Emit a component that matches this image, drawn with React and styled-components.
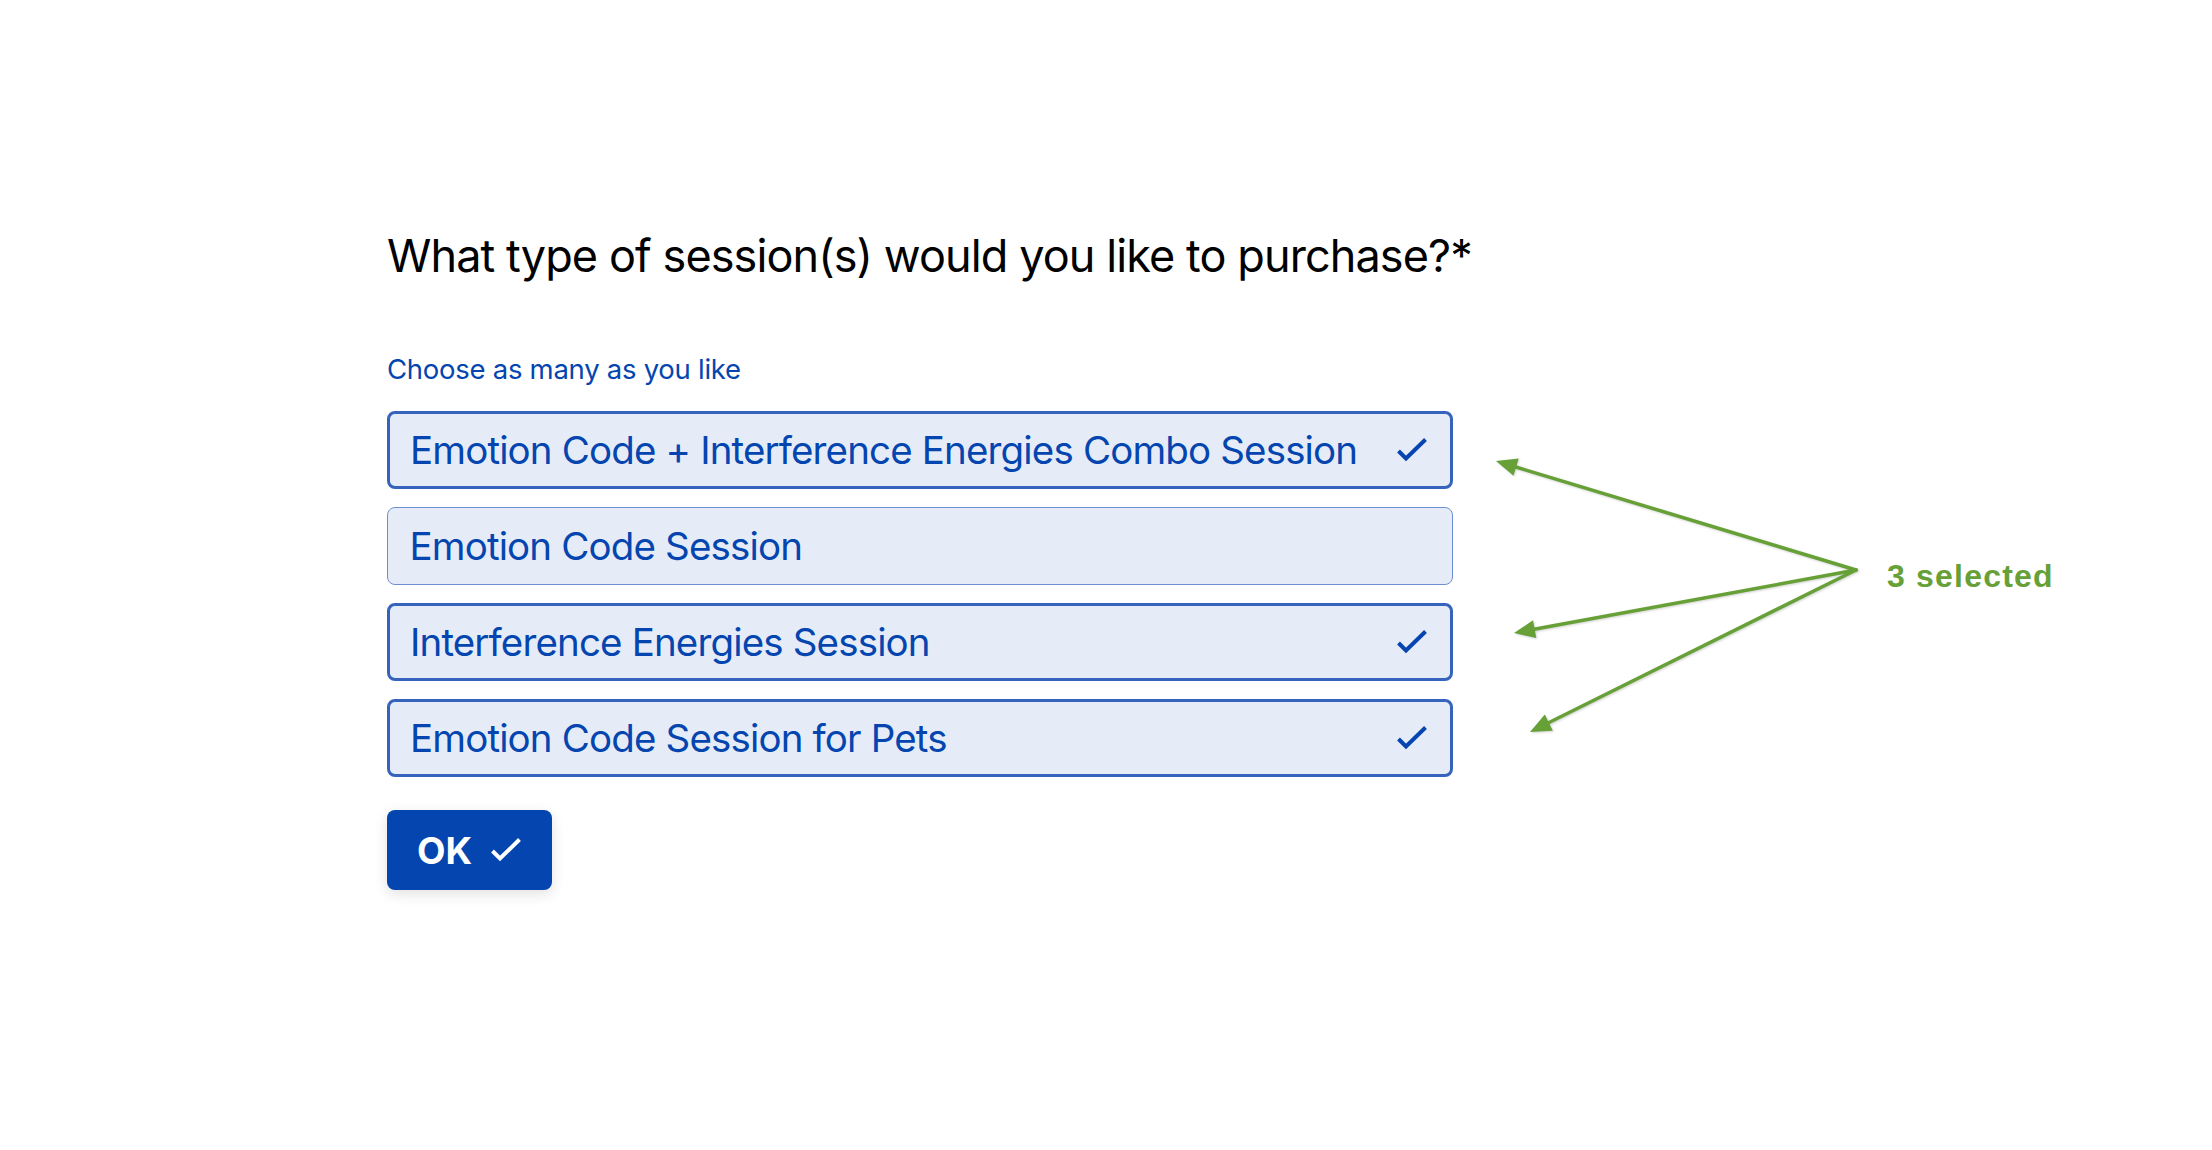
import React from "react";
import styled, { createGlobalStyle } from "styled-components";

const GlobalStyle = createGlobalStyle`
  html, body { margin: 0; padding: 0; background: #ffffff; }
  body { font-family: Inter, "Noto Sans", sans-serif; }
`;

const Page = styled.main`
  width: 2212px;
  height: 1150px;
  box-sizing: border-box;
  padding: 229px 0 0 387px;
  background: #ffffff;
`;

const Heading = styled.h1`
  margin: 0;
  font-family: Inter, sans-serif;
  font-weight: 400;
  font-size: 45px;
  line-height: 54px;
  color: #000000;
  letter-spacing: -0.9px;
`;

const Hint = styled.p`
  margin: 70px 0 0;
  font-family: Inter, sans-serif;
  font-size: 27.5px;
  line-height: 33px;
  color: #0445af;
  letter-spacing: -0.27px;
`;

const ChoiceRow = styled.div`
  display: flex;
  align-items: flex-start;
  margin-top: 25px;
`;

const ChoiceList = styled.ul`
  list-style: none;
  margin: 0;
  padding: 0;
  width: 1066px;
  display: flex;
  flex-direction: column;
  gap: 18px;
`;

const Choice = styled.li`
  box-sizing: border-box;
  height: 78px;
  display: flex;
  align-items: center;
  justify-content: space-between;
  padding: 0 22px 0 ${(p) => (p.$selected ? 20 : 21.5)}px;
  background: #e6ecf7;
  border: ${(p) => (p.$selected ? "3px solid #3563be" : "1.5px solid #6d8fd2")};
  border-radius: 8px;
  font-family: Inter, sans-serif;
  font-size: 38.5px;
  color: #0445af;
  letter-spacing: -0.85px;
`;

const CheckIcon = styled.svg`
  width: 32px;
  height: 26px;
  flex: none;
  display: block;
`;

const Annotation = styled.svg`
  width: 420px;
  height: 366px;
  flex: none;
  display: block;
  overflow: visible;
  filter: drop-shadow(1px 1px 1px rgba(0, 0, 0, 0.18));
`;

const Label = styled.span`
  margin: 149px 0 0 14px;
  font-family: "Liberation Sans", Arial, sans-serif;
  font-weight: 700;
  font-size: 32px;
  line-height: 1;
  letter-spacing: 1.2px;
  color: #66a036;
  white-space: nowrap;
`;

const OkButton = styled.button`
  margin-top: 33px;
  box-sizing: border-box;
  width: 165px;
  height: 80px;
  display: flex;
  align-items: center;
  gap: 18px;
  padding: 0 0 0 30px;
  border: none;
  border-radius: 8px;
  background: #0445af;
  color: #ffffff;
  font-family: Inter, sans-serif;
  font-weight: 700;
  font-size: 37px;
  box-shadow: 0 4px 14px rgba(0, 0, 0, 0.12);
`;

const Check = ({ color = "#0445af" }) => (
  <CheckIcon viewBox="0 0 32 26" aria-hidden="true">
    <polyline
      points="2.5,14 10,21.5 29.5,2.5"
      fill="none"
      stroke={color}
      strokeWidth="4"
      strokeLinecap="butt"
      strokeLinejoin="miter"
    />
  </CheckIcon>
);

const apex = [403, 159];
const tips = [
  [43, 50],
  [61, 222],
  [77, 321],
];

function arrow(a, t) {
  const dx = t[0] - a[0];
  const dy = t[1] - a[1];
  const len = Math.hypot(dx, dy);
  const ux = dx / len;
  const uy = dy / len;
  const L = 21;
  const W = 18;
  const bx = t[0] - ux * L;
  const by = t[1] - uy * L;
  const nx = -uy;
  const ny = ux;
  const head = `${t[0]},${t[1]} ${bx + (nx * W) / 2},${by + (ny * W) / 2} ${bx - (nx * W) / 2},${by - (ny * W) / 2}`;
  return { line: [a[0], a[1], bx + ux * 2, by + uy * 2], head };
}

const options = [
  { label: "Emotion Code + Interference Energies Combo Session", selected: true },
  { label: "Emotion Code Session", selected: false },
  { label: "Interference Energies Session", selected: true },
  { label: "Emotion Code Session for Pets", selected: true },
];

export default function App() {
  const green = "#66a036";
  return (
    <>
      <GlobalStyle />
      <Page>
        <Heading>What type of session(s) would you like to purchase?*</Heading>
        <Hint>Choose as many as you like</Hint>
        <ChoiceRow>
          <ChoiceList>
            {options.map((o) => (
              <Choice key={o.label} $selected={o.selected}>
                <span>{o.label}</span>
                {o.selected && <Check />}
              </Choice>
            ))}
          </ChoiceList>
          <Annotation viewBox="0 0 420 366" aria-hidden="true">
            {tips.map((t, i) => {
              const a = arrow(apex, t);
              return (
                <g key={i}>
                  <line
                    x1={a.line[0]}
                    y1={a.line[1]}
                    x2={a.line[2]}
                    y2={a.line[3]}
                    stroke={green}
                    strokeWidth="3.5"
                    strokeLinecap="round"
                  />
                  <polygon points={a.head} fill={green} />
                </g>
              );
            })}
          </Annotation>
          <Label>3 selected</Label>
        </ChoiceRow>
        <OkButton type="button">
          OK
          <Check color="#ffffff" />
        </OkButton>
      </Page>
    </>
  );
}
